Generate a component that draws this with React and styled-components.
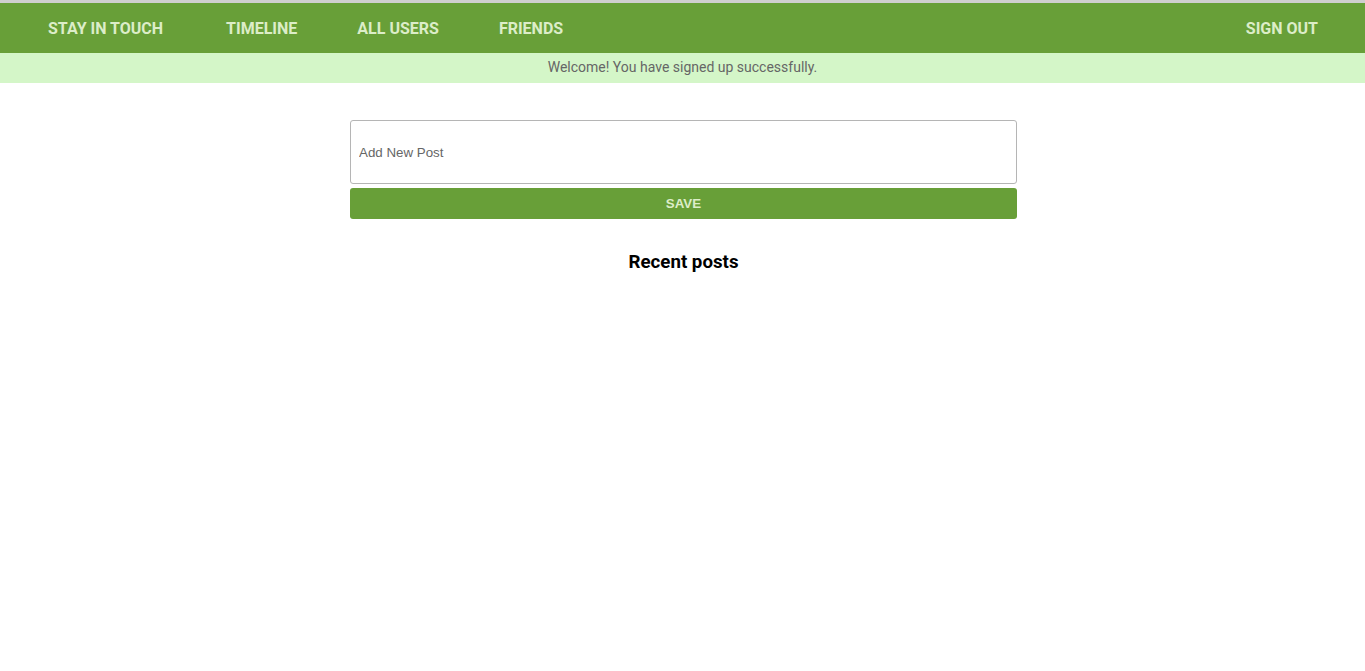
import React, { useState } from 'react';
import styled, { createGlobalStyle } from 'styled-components';

const GlobalStyle = createGlobalStyle`
    body {
        margin: 0;
        font-family: Roboto, "Liberation Sans", sans-serif;
        background: #fff;
    }
`;

const links = ['Timeline', 'All users', 'Friends'];

export default function App() {
    const [text, setText] = useState('');

    return (
        <>
            <GlobalStyle />
            <TopLine />
            <NavBar>
                <NavGroup>
                    <Brand href="#">Stay in touch</Brand>
                    {links.map((name) => (
                        <NavLink key={name} href="#">
                            {name}
                        </NavLink>
                    ))}
                </NavGroup>
                <NavLink href="#">Sign out</NavLink>
            </NavBar>
            <Notice>Welcome! You have signed up successfully.</Notice>
            <Main>
                <PostForm onSubmit={(e) => e.preventDefault()}>
                    <PostInput placeholder="Add New Post" value={text} onChange={(e) => setText(e.target.value)} />
                    <SaveButton type="submit">Save</SaveButton>
                </PostForm>
                <Heading>Recent posts</Heading>
            </Main>
        </>
    );
}

const TopLine = styled.div`
    height: 3px;
    background: #cfcfcf;
`;

const NavBar = styled.nav`
    height: 50px;
    display: flex;
    align-items: center;
    justify-content: space-between;
    padding: 0 17px 0 18px;
    background: #689f38;
`;

const NavGroup = styled.div`
    display: flex;
    align-items: center;
`;

const NavLink = styled.a`
    padding: 0 30px;
    color: #dcedc8;
    font-size: 16px;
    font-weight: 700;
    text-transform: uppercase;
    text-decoration: none;
`;

const Brand = styled(NavLink)`
    margin-right: 3px;
`;

const Notice = styled.div`
    box-sizing: border-box;
    height: 30px;
    padding-bottom: 2px;
    display: flex;
    align-items: center;
    justify-content: center;
    background: #d4f6c8;
    color: #666;
    font-size: 14px;
`;

const Main = styled.main`
    width: 667px;
    margin-left: calc(50% - 332.5px);
    padding-top: 37px;
    display: flex;
    flex-direction: column;
`;

const PostForm = styled.form`
    display: flex;
    flex-direction: column;
    gap: 4px;
`;

const PostInput = styled.input`
    box-sizing: border-box;
    height: 64px;
    padding: 0 8px;
    border: 1px solid #b5b5b5;
    border-radius: 3px;
    font-family: "Liberation Sans", Arial, sans-serif;
    font-size: 13.333px;
    color: #333;
    outline: none;

    &::placeholder {
        color: #666;
    }
`;

const SaveButton = styled.button`
    height: 31px;
    border: none;
    border-radius: 3px;
    background: #689f38;
    color: #dcedc8;
    font-family: "Liberation Sans", Arial, sans-serif;
    font-size: 13.333px;
    font-weight: 700;
    text-transform: uppercase;
    cursor: pointer;
`;

const Heading = styled.h3`
    margin: 32px 0 0;
    text-align: center;
    font-size: 18.72px;
    font-weight: 700;
    color: #000;
`;
